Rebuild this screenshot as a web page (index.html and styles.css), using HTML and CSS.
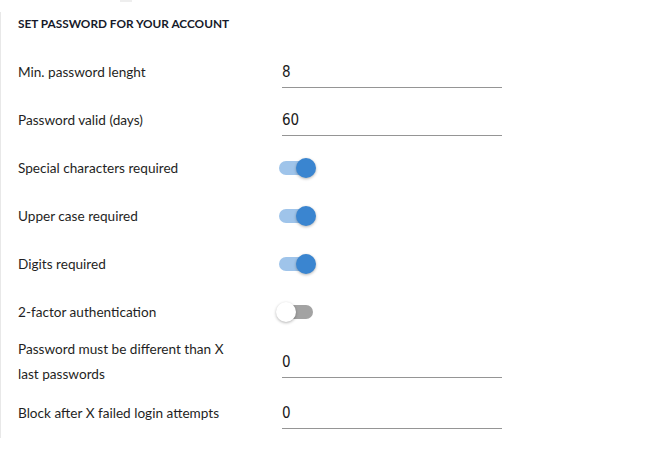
FILE: index.html
```html
<!DOCTYPE html>
<html>
<head>
<meta charset="utf-8">
<link rel="stylesheet" href="styles.css">
</head>
<body>
<div class="topmark"></div>
<section class="panel">
  <h2 class="title">SET PASSWORD FOR YOUR ACCOUNT</h2>
  <div class="row">
    <div class="label">Min. password lenght</div>
    <div class="field"><span class="value">8</span></div>
  </div>
  <div class="row">
    <div class="label">Password valid (days)</div>
    <div class="field"><span class="value">60</span></div>
  </div>
  <div class="row">
    <div class="label">Special characters required</div>
    <div class="switch on"><span class="track"></span><span class="thumb"></span></div>
  </div>
  <div class="row">
    <div class="label">Upper case required</div>
    <div class="switch on"><span class="track"></span><span class="thumb"></span></div>
  </div>
  <div class="row">
    <div class="label">Digits required</div>
    <div class="switch on"><span class="track"></span><span class="thumb"></span></div>
  </div>
  <div class="row">
    <div class="label">2-factor authentication</div>
    <div class="switch"><span class="track"></span><span class="thumb"></span></div>
  </div>
  <div class="row tall">
    <div class="label multi">Password must be different than X last passwords</div>
    <div class="field"><span class="value">0</span></div>
  </div>
  <div class="row">
    <div class="label">Block after X failed login attempts</div>
    <div class="field"><span class="value">0</span></div>
  </div>
</section>
</body>
</html>
```

FILE: styles.css
```css
html, body {
  margin: 0;
  padding: 0;
  background: #ffffff;
}
body {
  font-family: Lato, "Noto Sans", sans-serif;
  color: #1f1f24;
  position: relative;
  width: 650px;
  height: 450px;
  overflow: hidden;
}
.topmark {
  position: absolute;
  left: 120px;
  top: 0;
  width: 12px;
  height: 2px;
  background: #eeeeee;
}
.panel {
  margin-top: 12px;
  height: 426px;
  border-left: 1px solid #e8e8e8;
  padding-left: 17px;
  box-sizing: border-box;
}
.title {
  margin: 0 0 12px 0;
  font-size: 11.8px;
  font-weight: 700;
  line-height: 24px;
  color: #161a2a;
}
.row {
  display: flex;
  align-items: center;
  min-height: 48px;
}
.row.tall {
  padding: 1px 0 2px 0;
}
.label {
  width: 264px;
  flex: none;
  font-size: 13.6px;
  line-height: 24px;
  color: #1f1f24;
}
.label.multi {
  width: 218px;
  margin-right: 46px;
  line-height: 25px;
}
.field {
  width: 220px;
  height: 30px;
  border-bottom: 1px solid #959595;
  display: flex;
  align-items: center;
}
.value {
  font-family: "DejaVu Sans Condensed", "DejaVu Sans", sans-serif;
  font-size: 15px;
  color: #1a1a1a;
}
.switch {
  position: relative;
  width: 34px;
  height: 14px;
  margin-left: -3px;
}
.track {
  display: block;
  width: 34px;
  height: 14px;
  border-radius: 7px;
  background: #a3a3a3;
}
.thumb {
  position: absolute;
  top: -3px;
  left: -3px;
  width: 20px;
  height: 20px;
  border-radius: 50%;
  background: #ffffff;
  box-shadow: 0 1px 3px rgba(0, 0, 0, 0.3);
}
.switch.on .track {
  background: #9fc4ea;
}
.switch.on .thumb {
  left: 17px;
  background: #3a85d0;
}
```
